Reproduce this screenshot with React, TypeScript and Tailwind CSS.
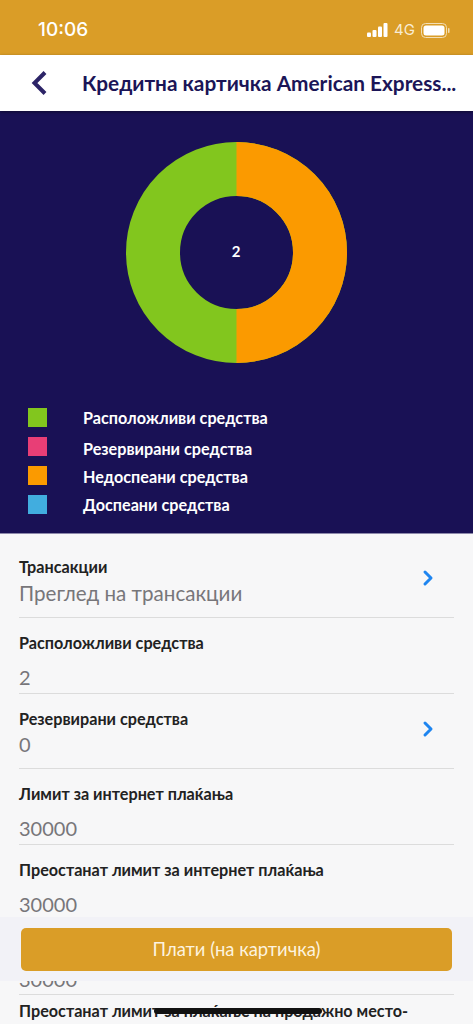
import React from 'react';
import { ChevronRight } from 'lucide-react';

const LEGEND = [
    { label: 'Расположливи средства', color: 'bg-[#82c61e]', nudge: 'mt-[1px]' },
    { label: 'Резервирани средства', color: 'bg-[#e83e76]', nudge: 'mt-[4px]' },
    { label: 'Недоспеани средства', color: 'bg-[#fb9a00]', nudge: 'mt-[2px]' },
    { label: 'Доспеани средства', color: 'bg-[#41addf]', nudge: 'mt-[0px]' },
];

type RowData = { label: string; value: string; tight?: boolean; arrow?: boolean; first?: boolean; last?: boolean };

const ROWS: RowData[] = [
    { label: 'Трансакции', value: 'Преглед на трансакции', tight: true, arrow: true, first: true },
    { label: 'Расположливи средства', value: '2' },
    { label: 'Резервирани средства', value: '0', tight: true, arrow: true },
    { label: 'Лимит за интернет плаќања', value: '30000' },
    { label: 'Преостанат лимит за интернет плаќања', value: '30000' },
    { label: 'Лимит за плаќање на продажно место', value: '30000' },
    { label: 'Преостанат лимит за плаќање на продажно место-', value: '30000', last: true },
];

const Row: React.FC<RowData> = ({ label, value, tight, arrow, first, last }) => (
    <div className={`relative ${first ? 'h-[84.4px]' : 'h-[75.4px]'} shrink-0 border-b border-[#dcdcdc]`}>
        <div className={`${first ? 'pt-[22px]' : last ? 'pt-[5px]' : 'pt-[14px]'} whitespace-nowrap text-[16.2px] leading-[22px] font-bold text-[#222]`}>{label}</div>
        <div className={`${first ? 'mt-[3px] text-[20.6px]' : tight ? 'mt-[2px] text-[20px]' : 'mt-[11px] text-[20px]'} leading-[24px] text-[#77767a]`}>{value}</div>
        {arrow && <ChevronRight className={`absolute right-[14px] ${first ? 'top-[32px]' : 'top-[23px]'} text-[#1e85f0]`} size={24} strokeWidth={3} />}
    </div>
);

const Donut = () => (
    <svg width="221" height="221" viewBox="0 0 221 221">
        <circle cx="110.5" cy="110.5" r="83.5" fill="none" stroke="#82c61e" strokeWidth="54" />
        <path d="M110.5 27 A83.5 83.5 0 0 1 110.5 194" fill="none" stroke="#fb9a00" strokeWidth="54" />
        <text x="110" y="115" textAnchor="middle" fill="#fff" fontSize="15" fontWeight="700">2</text>
    </svg>
);

export default function App() {
    return (
        <div className="relative h-[1024px] w-[473px] overflow-hidden bg-[#f7f7f8] font-['Lato','Open_Sans',sans-serif]">
            {/* status bar */}
            <div className="flex h-[55px] items-start justify-between bg-[#da9d27] pl-[38px] pr-[23px] pt-[19px] text-white">
                <span className="font-['Inter',sans-serif] text-[19px] leading-[22px] font-medium">10:06</span>
                <div className="flex items-center gap-[6px] pt-[3px]">
                    <svg width="21" height="14" viewBox="0 0 21 14" fill="#fff">
                        <rect x="0" y="9.5" width="4" height="4.5" rx="1" />
                        <rect x="5.5" y="7" width="4" height="7" rx="1" />
                        <rect x="11" y="3.5" width="4" height="10.5" rx="1" />
                        <rect x="16.5" y="0" width="4" height="14" rx="1" />
                    </svg>
                    <span className="font-['Inter',sans-serif] text-[15px] leading-[16px] text-[#f8ecd4]">4G</span>
                    <svg width="29" height="15" viewBox="0 0 29 15">
                        <rect x="0.5" y="0.5" width="25" height="14" rx="4" fill="none" stroke="#f3dfb6" />
                        <rect x="2.5" y="2.5" width="21" height="10" rx="2.5" fill="#fff" />
                        <rect x="27" y="5" width="1.5" height="5" rx="0.7" fill="#f3dfb6" />
                    </svg>
                </div>
            </div>

            {/* header */}
            <div className="relative z-10 flex h-[56px] items-center bg-white pb-[1px] shadow-[0_1px_3px_rgba(0,0,0,0.45)]">
                <svg className="ml-[30px]" width="18" height="26" viewBox="0 0 18 26" fill="none">
                    <path d="M15 2.5 L4.5 13 L15 23.5" stroke="#2c2467" strokeWidth="4" />
                </svg>
                <div className="ml-[34px] whitespace-nowrap text-[20.8px] leading-[26px] font-bold text-[#1b1557]">Кредитна картичка American Express...</div>
            </div>

            {/* chart */}
            <div className="h-[423px] border-b border-[#8d89ab] bg-[#191155] pl-[28px]">
                <div className="ml-[98px] pt-[31px]">
                    <Donut />
                </div>
                <div className="mt-[40px] flex flex-col">
                    {LEGEND.map(item => (
                        <div key={item.label} className="flex h-[29px] items-center gap-[36px]">
                            <span className={`h-[19px] w-[19px] ${item.color}`} />
                            <span className={`${item.nudge} whitespace-nowrap text-[16.2px] leading-[20px] font-bold text-white`}>{item.label}</span>
                        </div>
                    ))}
                </div>
            </div>

            {/* details */}
            <div className="mx-[19px] flex flex-col">
                {ROWS.map(row => (
                    <Row key={row.label} {...row} />
                ))}
            </div>

            {/* pay button */}
            <div className="absolute left-0 right-0 top-[917px] h-[64px] bg-[#f2f2f7] pl-[21px] pr-[21px] pt-[11px]">
                <div className="flex h-[43px] items-center justify-center rounded-[5px] bg-[#da9d27] text-[18.4px] text-[#fdf3df]">Плати (на картичка)</div>
            </div>

            {/* home indicator */}
            <div className="absolute left-[154px] top-[1008px] h-[6px] w-[168px] rounded-full bg-[#111]" />
        </div>
    );
}
